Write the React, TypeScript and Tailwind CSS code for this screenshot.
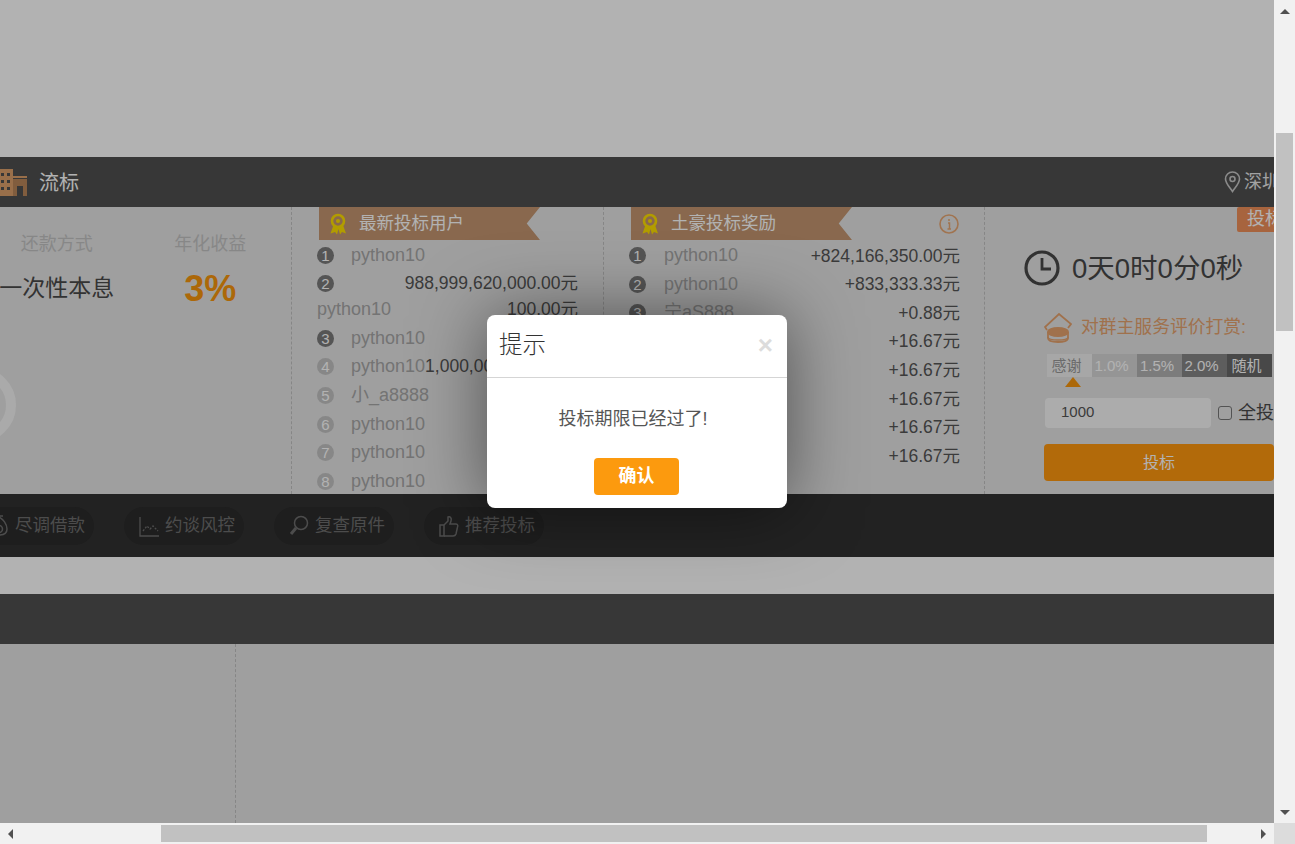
const font = "font-['Liberation_Sans','Noto_Sans_CJK_SC',sans-serif]"

interface Row {
  name: string
  amount: string
}

const rich: Row[] = [
  { name: 'python10', amount: '+824,166,350.00元' },
  { name: 'python10', amount: '+833,333.33元' },
  { name: '宁aS888', amount: '+0.88元' },
  { name: 'python10', amount: '+16.67元' },
  { name: 'python10', amount: '+16.67元' },
  { name: 'python10', amount: '+16.67元' },
  { name: 'python10', amount: '+16.67元' },
  { name: 'python10', amount: '+16.67元' },
]

const latestTail = [
  { n: 5, name: '小_a8888' },
  { n: 6, name: 'python10' },
  { n: 7, name: 'python10' },
  { n: 8, name: 'python10' },
]

function Badge({ n, dark }: { n: number; dark: boolean }) {
  return (
    <span className={`flex h-[17px] w-[17px] shrink-0 items-center justify-center rounded-full text-[15px] leading-none text-white ${dark ? 'bg-[#7a7a7a]' : 'bg-[#c2c2c2]'}`}>
      {n}
    </span>
  )
}

function Medal() {
  return (
    <svg width="18" height="22" viewBox="0 0 18 22" fill="none">
      <path d="M4.500 12 L1.500 20.500 L6 19 L8 21.500 L9.500 16 L11 21.500 L13 19 L17 20.500 L14 12" fill="#ffe000" />
      <circle cx="9" cy="8" r="6" stroke="#ffe000" strokeWidth="2.600" fill="#c49670" />
      <circle cx="9" cy="8" r="2" fill="#ffe000" />
    </svg>
  )
}

function Ribbon({ title }: { title: string }) {
  return (
    <div className="ml-[2px] flex h-[33px] w-[221px] items-center bg-[#c49670] pl-[10px] [clip-path:polygon(0_0,100%_0,94%_50%,100%_100%,0_100%)]">
      <Medal />
      <span className="ml-[12px] text-[17.500px] text-white">{title}</span>
    </div>
  )
}

function Pill({ label, children }: { label: string; children: React.ReactNode }) {
  return (
    <div className="flex h-[38px] w-[120px] shrink-0 items-center gap-[6px] rounded-full bg-[#2b2b2b] pl-[15px] text-[17.500px] text-[#6e6e6e]">
      {children}
      <span className="whitespace-nowrap">{label}</span>
    </div>
  )
}

function Triangle({ dir }: { dir: 'up' | 'down' | 'left' | 'right' }) {
  const points = {
    up: '0,8 5,3 10,8',
    down: '0,2 10,2 5,7',
    left: '8,0 8,10 3,5',
    right: '3,0 3,10 8,5',
  }[dir]
  return (
    <svg width="10" height="10" viewBox="0 0 10 10">
      <polygon points={points} fill="#505050" />
    </svg>
  )
}

export default function App() {
  return (
    <div className={`flex h-[844px] w-[1295px] overflow-hidden bg-[#dcdcdc] ${font}`}>
      <div className="flex h-[844px] w-[1274px] shrink-0 flex-col">
        <div className="relative h-[823px] w-[1274px] shrink-0 overflow-hidden bg-white">
          <div className="h-[157px]" />

          {/* project header */}
          <div className="flex h-[50px] items-center justify-between bg-[#505050] text-white">
            <div className="flex items-center">
              <svg width="35" height="28" viewBox="0 0 35 28" className="-ml-[8px] mt-[1px]">
                <rect x="0" y="0" width="21" height="27" fill="#dc9f6a" />
                <g fill="#505050">
                  <rect x="9" y="4" width="3" height="3" />
                  <rect x="15" y="4" width="3" height="3" />
                  <rect x="9" y="11" width="3" height="3" />
                  <rect x="15" y="11" width="3" height="3" />
                  <rect x="9" y="18" width="3" height="3" />
                  <rect x="15" y="18" width="3" height="3" />
                </g>
                <path d="M21 7h14v2H21z" fill="#dc9f6a" />
                <path d="M21 10h14v17h-4v-10h-6v10h-4z" fill="#b98659" />
              </svg>
              <span className="ml-[12px] pt-[1px] text-[20px]">流标</span>
            </div>
            <div className="-mr-[6px] flex shrink-0 items-center gap-[3px] text-[18px] text-[#e8e8e8]">
              <svg width="17" height="22" viewBox="0 0 17 22" fill="none" stroke="#c8c8c8" strokeWidth="1.600">
                <path d="M8.500 20.500C5 15.500 1.500 12 1.500 8a7 7 0 0 1 14 0c0 4-3.500 7.500-7 12.500z" />
                <circle cx="8.500" cy="8" r="2.500" />
              </svg>
              <span className="w-[36px] whitespace-nowrap">深圳</span>
            </div>
          </div>

          {/* project panel */}
          <div className="flex h-[287px] overflow-hidden bg-[#e4e4e4]">
            <div className="-ml-[20px] h-full w-[312px] shrink-0 border-r border-dashed border-[#c0c0c0]">
              <div className="grid w-[307px] grid-cols-2 pt-[25px] text-center">
                <span className="text-[18px] leading-[24px] text-[#c2c2c2]">还款方式</span>
                <span className="text-[18px] leading-[24px] text-[#c2c2c2]">年化收益</span>
                <span className="mt-[12px] whitespace-nowrap text-[23px] leading-[40px] text-[#4a4a4a]">一次性本息</span>
                <span className="mt-[13px] text-[36px] font-bold leading-[40px] text-[#f7960e]">3%</span>
              </div>
              <div className="-ml-[40px] mt-[58px] h-[76px] w-[76px] rounded-full border-[10px] border-[#f4f4f4]" />
            </div>

            <div className="h-full w-[312px] shrink-0 overflow-hidden border-r border-dashed border-[#c0c0c0] px-[25px] text-[18px] text-[#a6a6a6]">
              <Ribbon title="最新投标用户" />
              <div className="flex h-[29px] items-center pt-[1px]">
                <Badge n={1} dark />
                <span className="ml-[17px]">python10</span>
              </div>
              <div className="flex h-[29px] items-center justify-between">
                <Badge n={2} dark />
                <span className="text-[17.500px] text-[#555]">988,999,620,000.00元</span>
              </div>
              <div className="flex h-[26px] items-center justify-between pb-[4px]">
                <span>python10</span>
                <span className="text-[17.500px] text-[#555]">100.00元</span>
              </div>
              <div className="flex h-[28px] items-center">
                <Badge n={3} dark />
                <span className="ml-[17px]">python10</span>
              </div>
              <div className="flex h-[29px] items-center whitespace-nowrap">
                <Badge n={4} dark={false} />
                <span className="ml-[17px]">python10</span>
                <span className="text-[17.500px] text-[#555]">1,000,000.00元</span>
              </div>
              {latestTail.map((r) => (
                <div key={r.n} className="flex h-[28.700px] items-center">
                  <Badge n={r.n} dark={false} />
                  <span className="ml-[17px]">{r.name}</span>
                </div>
              ))}
            </div>

            <div className="relative h-full w-[381px] shrink-0 border-r border-dashed border-[#c0c0c0] pl-[25px] pr-[24px] text-[18px]">
              <Ribbon title="土豪投标奖励" />
              <svg width="20" height="20" viewBox="0 0 20 20" fill="none" stroke="#e6a673" className="absolute right-[25px] top-[7px]">
                <circle cx="10" cy="10" r="9" strokeWidth="1.600" />
                <path d="M10 5v2M9 9h1.500v6M8.500 15h3.500" strokeWidth="1.500" />
              </svg>
              <div className="pt-[1.500px]">
                {rich.map((r, i) => (
                  <div key={i} className="flex h-[28.600px] items-center">
                    <Badge n={i + 1} dark={i < 3} />
                    <span className="ml-[18px] text-[#a6a6a6]">{r.name}</span>
                    <span className="ml-auto text-[17.500px] text-[#555]">{r.amount}</span>
                  </div>
                ))}
              </div>
            </div>

            <div className="relative min-w-0 flex-1 pl-[59px]">
              <div className="absolute right-0 top-0 h-[25px] w-[37px] overflow-hidden whitespace-nowrap rounded-l-[2px] bg-[#f0905a] pl-[10px] text-[18px] leading-[24px] text-white">投标</div>
              <div className="-ml-[20px] mt-[41px] flex h-[40px] items-center">
                <svg width="36" height="36" viewBox="0 0 36 36" fill="none" stroke="#484848" strokeWidth="3.200">
                  <circle cx="18" cy="18" r="16" />
                  <path d="M18 8v11h9" strokeWidth="2.800" />
                </svg>
                <span className="ml-[12px] whitespace-nowrap pt-[1px] text-[27.500px] text-[#484848]">0天0时0分0秒</span>
              </div>
              <div className="mt-[25px] flex h-[30px] items-center gap-[9px] text-[17.800px] text-[#e5a26d]">
                <svg width="28" height="30" viewBox="0 0 28 30" fill="none" stroke="#e5a26d" strokeWidth="1.800">
                  <path d="M3 17 L1 14 L15 1 L27 11 L24 15" />
                  <ellipse cx="14" cy="19" rx="10" ry="4" fill="#e5a26d" />
                  <path d="M4 19v6c0 3 4.500 4 10 4s10-1 10-4v-6" />
                  <path d="M4 24c0 2.500 4.500 3 10 3s10-.5 10-3" strokeWidth="1.300" />
                </svg>
                <span className="whitespace-nowrap pb-[2px]">对群主服务评价打赏:</span>
              </div>
              <div className="ml-[3px] mt-[11px] flex h-[23px] w-[225px] text-center text-[15px] leading-[23px] text-white">
                <span className="w-[45px] bg-[#f0f0f0] pr-[6px] text-[#999]">感谢</span>
                <span className="w-[45px] bg-[#d6d6d6] pr-[6px]">1.0%</span>
                <span className="w-[45px] bg-[#b2b2b2] pr-[5px]">1.5%</span>
                <span className="w-[45px] bg-[#868686] pr-[6px]">2.0%</span>
                <span className="w-[45px] bg-[#676767] pr-[6px]">随机</span>
              </div>
              <div className="ml-[21px] h-0 w-0 border-x-[8px] border-b-[10px] border-x-transparent border-b-[#f7960e]" />
              <div className="mt-[11px] flex items-center">
                <div className="ml-[1px] flex h-[30px] w-[168px] items-center rounded-[4px] bg-[#f7f7f7] pb-[1px] pl-[16px] text-[15px] text-[#555]">1000</div>
                <span className="ml-[7px] h-[14px] w-[14px] shrink-0 rounded-[3px] border border-[#777] bg-[#e6e6e6]" />
                <span className="ml-[6px] whitespace-nowrap text-[18px] text-[#4a4a4a]">全投</span>
              </div>
              <div className="mt-[16px] flex h-[37px] w-[230px] items-center justify-center rounded-[4px] bg-[#ff980f] pt-[1px] text-[16px] text-white">投标</div>
            </div>
          </div>

          {/* actions */}
          <div className="-ml-[26px] flex h-[63px] items-center gap-[30px] overflow-hidden bg-[#323232]">
            <Pill label="尽调借款">
              <svg width="20" height="22" viewBox="0 0 20 22" fill="none" stroke="#6e6e6e" strokeWidth="1.500">
                <path d="M10 2c4 2 8 7 8 12 0 4-3 6-8 6s-8-2-8-6c0-5 4-10 8-12z" />
                <circle cx="10" cy="14" r="3.500" />
                <path d="M8 1h6" />
              </svg>
            </Pill>
            <Pill label="约谈风控">
              <svg width="20" height="22" viewBox="0 0 20 22" fill="none" stroke="#6e6e6e" strokeWidth="1.300">
                <path d="M1 2v19h19" />
                <path d="M4 16l4-5 3 3 3-3 3 3 2 2" strokeDasharray="2 1.500" />
              </svg>
            </Pill>
            <Pill label="复查原件">
              <svg width="20" height="24" viewBox="0 0 20 24" fill="none" stroke="#6e6e6e" strokeWidth="1.500">
                <circle cx="12" cy="9" r="6.500" />
                <path d="M7 14l-5 6" strokeWidth="3" />
              </svg>
            </Pill>
            <Pill label="推荐投标">
              <svg width="20" height="22" viewBox="0 0 20 22" fill="none" stroke="#6e6e6e" strokeWidth="1.500">
                <path d="M1 10h4v11H1z" />
                <path d="M5 10l4-4V2c2-1 4 1 3 4l-1 3h6c2 0 2 2 1.500 3L17 19c-.5 1.500-1.500 2-3 2H5" />
              </svg>
            </Pill>
          </div>

          <div className="h-[37px]" />
          <div className="h-[50px] bg-[#505050]" />
          <div className="h-[179px] bg-[#e4e4e4]">
            <div className="h-full w-[236px] border-r border-dashed border-[#c0c0c0]" />
          </div>

          {/* overlay */}
          <div className="absolute inset-0 flex justify-center bg-black/30 pt-[315px]">
            <div className="h-[193px] w-[300px] overflow-hidden rounded-[8px] bg-white shadow-[0_0_70px_rgba(0,0,0,0.5)]">
              <div className="flex h-[63px] items-center justify-between border-b border-[#d5d5d5] pl-[12px] pr-[14px]">
                <span className="text-[23.500px] font-light text-[#333]">提示</span>
                <span className="-mt-[3px] text-[26px] font-bold leading-none text-[#dcdcdc]">×</span>
              </div>
              <p className="pr-[8px] pt-[29px] text-center text-[18px] leading-[25px] text-[#555]">投标期限已经过了!</p>
              <button className="ml-[107px] mt-[26px] flex h-[37px] w-[85px] items-center justify-center rounded-[4px] bg-[#fc9a0e] text-[18px] font-bold text-white">确认</button>
            </div>
          </div>
        </div>

        {/* horizontal scrollbar */}
        <div className="flex h-[21px] items-center bg-[#f1f1f1] pl-[5px] pr-[6px]">
          <Triangle dir="left" />
          <div className="ml-[146px] h-[17px] w-[1046px] bg-[#c1c1c1]" />
          <div className="ml-auto">
            <Triangle dir="right" />
          </div>
        </div>
      </div>

      {/* vertical scrollbar */}
      <div className="flex h-[823px] w-[21px] flex-col items-center bg-[#f1f1f1]">
        <div className="flex h-[21px] items-center">
          <Triangle dir="up" />
        </div>
        <div className="mt-[112px] h-[198px] w-[17px] bg-[#c1c1c1]" />
        <div className="mt-auto flex h-[21px] items-center">
          <Triangle dir="down" />
        </div>
      </div>
    </div>
  )
}
